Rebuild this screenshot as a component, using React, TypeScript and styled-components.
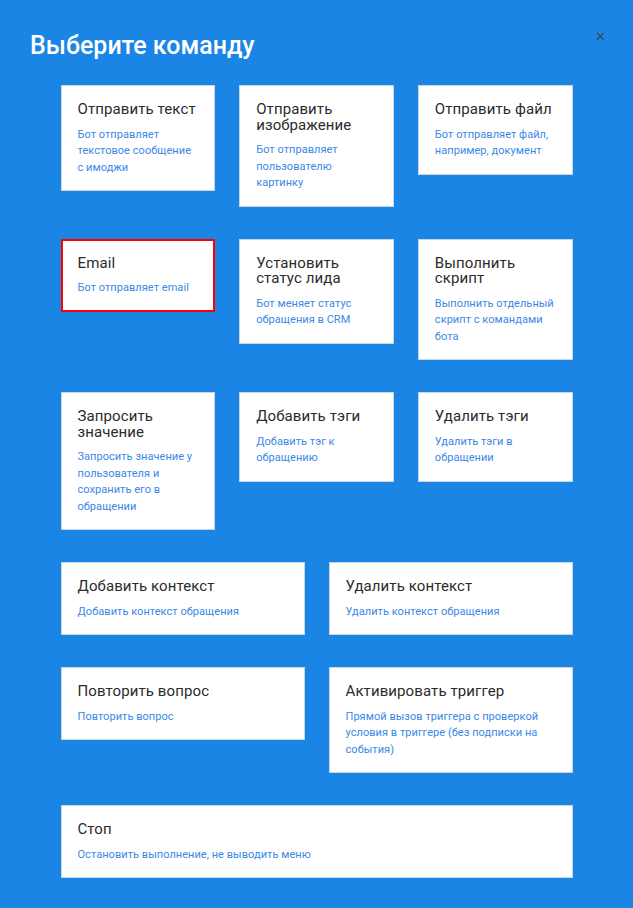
import styled, { createGlobalStyle } from 'styled-components';

const GlobalStyle = createGlobalStyle`
    html, body {
        margin: 0;
        padding: 0;
        background: #1b85e6;
        font-family: Roboto, "Liberation Sans", sans-serif;
    }
`;

interface Command {
    title: string;
    text: string;
    selected?: boolean;
}

const rows: { columns: number; items: Command[] }[] = [
    {
        columns: 3,
        items: [
            { title: 'Отправить текст', text: 'Бот отправляет текстовое сообщение с имоджи' },
            { title: 'Отправить изображение', text: 'Бот отправляет пользователю картинку' },
            { title: 'Отправить файл', text: 'Бот отправляет файл, например, документ' },
        ],
    },
    {
        columns: 3,
        items: [
            { title: 'Email', text: 'Бот отправляет email', selected: true },
            { title: 'Установить статус лида', text: 'Бот меняет статус обращения в CRM' },
            { title: 'Выполнить скрипт', text: 'Выполнить отдельный скрипт с командами бота' },
        ],
    },
    {
        columns: 3,
        items: [
            { title: 'Запросить значение', text: 'Запросить значение у пользователя и сохранить его в обращении' },
            { title: 'Добавить тэги', text: 'Добавить тэг к обращению' },
            { title: 'Удалить тэги', text: 'Удалить тэги в обращении' },
        ],
    },
    {
        columns: 2,
        items: [
            { title: 'Добавить контекст', text: 'Добавить контекст обращения' },
            { title: 'Удалить контекст', text: 'Удалить контекст обращения' },
        ],
    },
    {
        columns: 2,
        items: [
            { title: 'Повторить вопрос', text: 'Повторить вопрос' },
            { title: 'Активировать триггер', text: 'Прямой вызов триггера с проверкой условия в триггере (без подписки на события)' },
        ],
    },
    {
        columns: 1,
        items: [{ title: 'Стоп', text: 'Остановить выполнение, не выводить меню' }],
    },
];

const Page = styled.div`
    min-height: 908px;
    background: #1b85e6;
    padding: 30px 0 31px;
    box-sizing: border-box;
    position: relative;
`;

const Header = styled.h1`
    margin: 0 0 23px 30px;
    font-size: 25px;
    line-height: 32px;
    font-weight: 500;
    color: #ffffff;
`;

const Close = styled.button`
    position: absolute;
    top: 30px;
    right: 26px;
    width: 14px;
    height: 14px;
    padding: 0;
    border: none;
    background: none;
    color: #37475a;
    font-size: 13px;
    line-height: 14px;
    cursor: pointer;
`;

const Grid = styled.div`
    width: 512px;
    margin: 0 auto;
    display: flex;
    flex-direction: column;
    gap: 32px;
`;

const Row = styled.div<{ $columns: number }>`
    display: grid;
    grid-template-columns: repeat(${p => p.$columns}, 1fr);
    column-gap: 24px;
    align-items: start;
`;

const Card = styled.div<{ $selected?: boolean }>`
    background: #ffffff;
    border: ${p => (p.$selected ? '2px solid #ff0000' : '1px solid #c9d5e3')};
    padding: ${p => (p.$selected ? '15px 15px 13px' : '16px 16px 14px')};
    box-sizing: border-box;
    cursor: pointer;
`;

const Title = styled.div`
    font-size: 15px;
    line-height: 15.5px;
    font-weight: 400;
    color: #2b2b2b;
    margin-bottom: 9px;
    letter-spacing: 0.1px;
`;

const Text = styled.div`
    font-size: 11px;
    line-height: 16.5px;
    color: #3a88e6;
    letter-spacing: 0.05px;
`;

export default function App() {
    return (
        <Page>
            <GlobalStyle />
            <Header>Выберите команду</Header>
            <Close aria-label="Закрыть">✕</Close>
            <Grid>
                {rows.map((row, i) => (
                    <Row key={i} $columns={row.columns}>
                        {row.items.map(item => (
                            <Card key={item.title} $selected={item.selected}>
                                <Title>{item.title}</Title>
                                <Text>{item.text}</Text>
                            </Card>
                        ))}
                    </Row>
                ))}
            </Grid>
        </Page>
    );
}
